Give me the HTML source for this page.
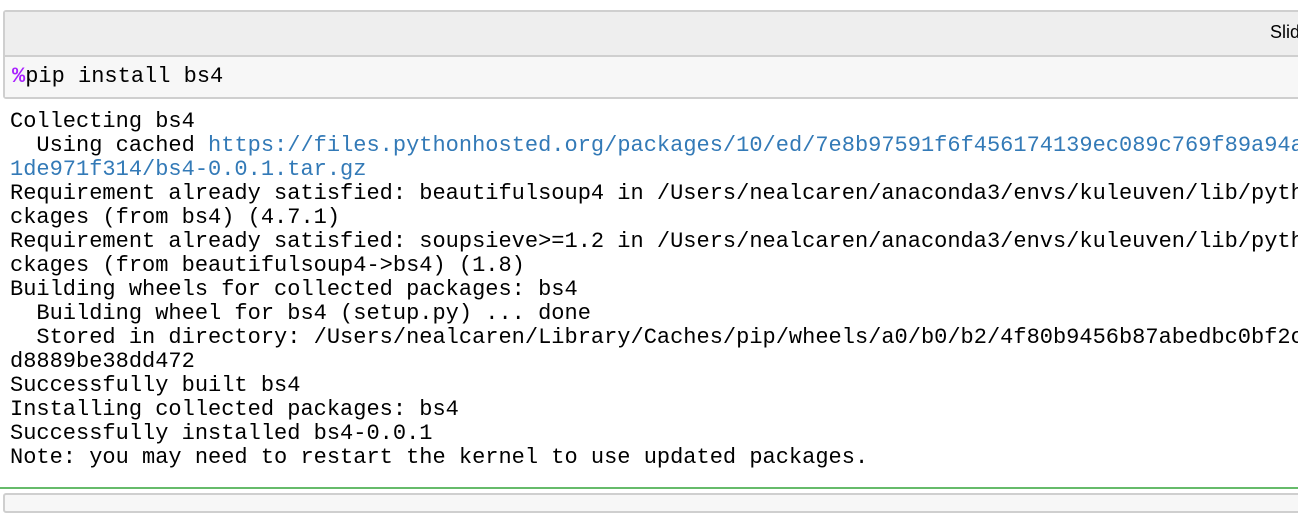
<!DOCTYPE html>
<html><head><meta charset="utf-8"><style>
body{margin:0;width:1298px;height:502px;overflow:hidden;background:#fff;position:relative;font-family:"Liberation Mono",monospace;}
.box{position:absolute;left:3px;top:10px;width:1300px;height:89px;border:2px solid #cfcfcf;border-radius:3px;box-sizing:border-box;}
.hdr{position:absolute;left:0;top:0;right:0;height:43px;background:#eee;border-bottom:2px solid #cfcfcf;}
.slide{position:absolute;left:1270px;top:22px;font-family:"Liberation Sans",sans-serif;font-size:18px;color:#000;}
.inp{position:absolute;left:0;top:45px;right:0;bottom:0;background:#f7f7f7;}
.code{position:absolute;left:12px;top:65px;font-size:22px;line-height:24px;white-space:pre;color:#000;}
.out{position:absolute;left:10px;top:110px;font-size:22px;line-height:24px;white-space:pre;color:#000;}
a{color:#337ab7;text-decoration:none;}
.g{position:absolute;left:0;top:487px;width:1298px;height:2px;background:#66bb6a;}
.nb{position:absolute;left:3px;top:493px;width:1300px;height:20px;border:2px solid #cfcfcf;border-radius:3px;background:#f7f7f7;box-sizing:border-box;}
</style></head><body>
<div class="box"><div class="hdr"></div><div class="inp"></div></div>
<div class="slide">Slid</div>
<div class="code"><span style="color:#aa22ff;font-weight:bold">%</span>pip install bs4</div>
<div class="out">Collecting bs4
  Using cached <a>https://files.pythonhosted.org/packages/10/ed/7e8b97591f6f456174139ec089c769f89a94a</a>
<a>1de971f314/bs4-0.0.1.tar.gz</a>
Requirement already satisfied: beautifulsoup4 in /Users/nealcaren/anaconda3/envs/kuleuven/lib/pyth
ckages (from bs4) (4.7.1)
Requirement already satisfied: soupsieve>=1.2 in /Users/nealcaren/anaconda3/envs/kuleuven/lib/pyth
ckages (from beautifulsoup4->bs4) (1.8)
Building wheels for collected packages: bs4
  Building wheel for bs4 (setup.py) ... done
  Stored in directory: /Users/nealcaren/Library/Caches/pip/wheels/a0/b0/b2/4f80b9456b87abedbc0bf2c
d8889be38dd472
Successfully built bs4
Installing collected packages: bs4
Successfully installed bs4-0.0.1
Note: you may need to restart the kernel to use updated packages.</div>
<div class="g"></div>
<div class="nb"></div>
</body></html>
